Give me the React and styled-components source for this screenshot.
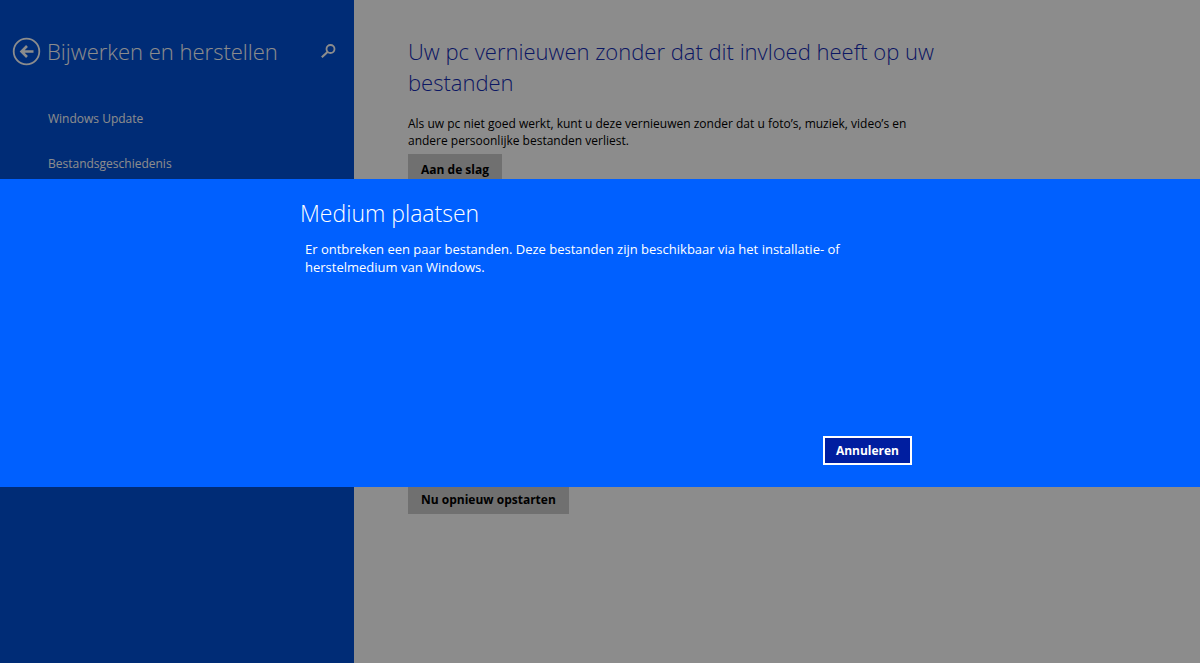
import React from "react";
import styled, { createGlobalStyle } from "styled-components";

const COLORS = {
  accent: "#0050d8",
  heading: "#142cb4",
  dialog: "#0060ff",
  dialogButton: "#001ea0",
  button: "#cccccc",
  scrim: "rgba(0, 0, 0, 0.45)",
};

const GlobalStyle = createGlobalStyle`
  * {
    box-sizing: border-box;
  }

  body {
    margin: 0;
    font-family: "Segoe UI", "Open Sans", "Noto Sans", sans-serif;
    font-size: 12px;
    line-height: 18px;
  }

  h1, h2, p, ul {
    margin: 0;
    padding: 0;
  }
`;

const Page = styled.div`
  min-height: 100vh;
  display: grid;
  grid-template-columns: 354px 1fr;
`;

const Sidebar = styled.aside`
  background: ${COLORS.accent};
  color: white;
`;

const SidebarHeader = styled.header`
  display: flex;
  align-items: center;
  gap: 6px;
  padding: 35px 17px 0 12px;
`;

const IconButton = styled.button`
  display: flex;
  padding: 0;
  border: 0;
  background: none;
  color: inherit;
`;

const SidebarTitle = styled.h1`
  flex: 1;
  font-size: 22px;
  font-weight: 300;
  line-height: 32px;
  white-space: nowrap;
`;

const NavList = styled.ul`
  display: grid;
  gap: 27px;
  padding: 43px 16px 0 48px;
  list-style: none;
`;

const NavLink = styled.a`
  color: inherit;
  text-decoration: none;
`;

const Main = styled.main`
  padding: 36px 54px;
`;

const Section = styled.section`
  max-width: 548px;

  & + & {
    margin-top: 300px;
  }
`;

const SectionTitle = styled.h2`
  margin-bottom: 17px;
  color: ${COLORS.heading};
  font-size: 22px;
  font-weight: 300;
  line-height: 31px;
`;

const SectionText = styled.p`
  max-width: 520px;
  margin-bottom: 5px;
  line-height: 17px;
`;

const Button = styled.button`
  height: 30px;
  padding: 2px 13px 0;
  border: 0;
  background: ${COLORS.button};
  color: black;
  font: inherit;
  font-weight: 700;
`;

const Scrim = styled.div`
  position: fixed;
  inset: 0;
  display: flex;
  align-items: center;
  padding-top: 3px;
  background: ${COLORS.scrim};
`;

const Dialog = styled.div`
  width: 100%;
  min-height: 308px;
  display: flex;
  flex-direction: column;
  padding: 18px 24% 22px 25%;
  background: ${COLORS.dialog};
  color: white;
`;

const DialogTitle = styled.h2`
  font-size: 23px;
  font-weight: 300;
  line-height: 32px;
`;

const DialogText = styled.p`
  max-width: 540px;
  margin-top: 11px;
  padding-left: 5px;
  font-size: 13px;
`;

const DialogActions = styled.div`
  display: flex;
  justify-content: flex-end;
  margin-top: auto;
`;

const DialogButton = styled(Button)`
  height: 29px;
  padding: 0 11px;
  border: 2px solid white;
  background: ${COLORS.dialogButton};
  color: white;
`;

const BackIcon = () => (
  <svg width="29" height="30" viewBox="0 0 29 30" fill="none" stroke="currentColor">
    <circle cx="14.5" cy="15.5" r="12.8" strokeWidth="1.8" />
    <path d="M21.5 15.5H9.5M15 10L9.5 15.5l5.5 5.5" strokeWidth="2.6" />
  </svg>
);

const SearchIcon = () => (
  <svg width="18" height="18" viewBox="0 0 18 18" fill="none" stroke="currentColor">
    <circle cx="11.5" cy="7" r="4" strokeWidth="1.8" />
    <path d="M8.5 10L2.8 15.2" strokeWidth="2.2" />
  </svg>
);

const App = () => (
  <>
    <GlobalStyle />
    <Page>
      <Sidebar>
        <SidebarHeader>
          <IconButton aria-label="Terug">
            <BackIcon />
          </IconButton>
          <SidebarTitle>Bijwerken en herstellen</SidebarTitle>
          <IconButton aria-label="Zoeken">
            <SearchIcon />
          </IconButton>
        </SidebarHeader>
        <nav>
          <NavList>
            <li>
              <NavLink href="#update">Windows Update</NavLink>
            </li>
            <li>
              <NavLink href="#history">Bestandsgeschiedenis</NavLink>
            </li>
          </NavList>
        </nav>
      </Sidebar>
      <Main>
        <Section>
          <SectionTitle>
            Uw pc vernieuwen zonder dat dit invloed heeft op uw bestanden
          </SectionTitle>
          <SectionText>
            Als uw pc niet goed werkt, kunt u deze vernieuwen zonder dat u
            foto’s, muziek, video’s en andere persoonlijke bestanden verliest.
          </SectionText>
          <Button>Aan de slag</Button>
        </Section>
        <Section>
          <Button>Nu opnieuw opstarten</Button>
        </Section>
      </Main>
    </Page>
    <Scrim>
      <Dialog role="dialog" aria-modal="true" aria-labelledby="dialog-title">
        <DialogTitle id="dialog-title">Medium plaatsen</DialogTitle>
        <DialogText>
          Er ontbreken een paar bestanden. Deze bestanden zijn beschikbaar via
          het installatie- of herstelmedium van Windows.
        </DialogText>
        <DialogActions>
          <DialogButton>Annuleren</DialogButton>
        </DialogActions>
      </Dialog>
    </Scrim>
  </>
);

export default App;
